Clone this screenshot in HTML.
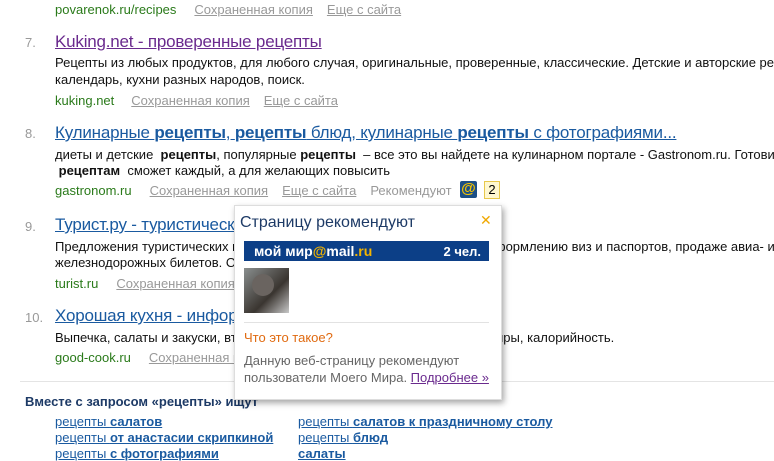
<!DOCTYPE html>
<html><head><meta charset="utf-8"><style>
body{margin:0;width:774px;height:455px;overflow:hidden;background:#fff;font-family:"Liberation Sans",Arial,sans-serif;position:relative}
.a{position:absolute;white-space:nowrap}
.num{color:#999;font-size:13px}
.t{font-size:17px;color:#1a5aa0;text-decoration:underline;letter-spacing:-0.2px}
.t.v{color:#6a2a8e}
.s{font-size:13px;color:#111}
.g{font-size:13px;color:#2a7a1a}
.c{font-size:13px;color:#999;text-decoration:underline}
.l{font-size:13px;color:#1a5aa0;text-decoration:underline}
b{font-weight:bold}
</style></head><body>
<div class="a" style="left:55px;top:1px"><span class="g">povarenok.ru/recipes</span><span class="c" style="margin-left:18px">Сохраненная копия</span><span class="c" style="margin-left:14px">Еще с сайта</span></div>

<div class="a num" style="left:25px;top:35px">7.</div>
<div class="a t v" style="left:55px;top:32px">Kuking.net - проверенные рецепты</div>
<div class="a s" style="left:55px;top:55px">Рецепты из любых продуктов, для любого случая, оригинальные, проверенные, классические. Детские и авторские рецепты</div>
<div class="a s" style="left:55px;top:72px">календарь, кухни разных народов, поиск.</div>
<div class="a" style="left:55px;top:92px"><span class="g">kuking.net</span><span class="c" style="margin-left:17px">Сохраненная копия</span><span class="c" style="margin-left:14px">Еще с сайта</span></div>

<div class="a num" style="left:25px;top:126px">8.</div>
<div class="a t" style="left:55px;top:123px">Кулинарные <b>рецепты</b>, <b>рецепты</b> блюд, кулинарные <b>рецепты</b> с фотографиями...</div>
<div class="a s" style="left:55px;top:147px">диеты и детские &nbsp;<b>рецепты</b>, популярные <b>рецепты</b> &nbsp;– все это вы найдете на кулинарном портале - Gastronom.ru. Готовить по</div>
<div class="a s" style="left:55px;top:163px">&nbsp;<b>рецептам</b> &nbsp;сможет каждый, а для желающих повысить</div>
<div class="a" style="left:55px;top:182px"><span class="g">gastronom.ru</span><span class="c" style="margin-left:18px">Сохраненная копия</span><span class="c" style="margin-left:14px">Еще с сайта</span><span style="margin-left:14px;font-size:13px;color:#999">Рекомендуют</span></div>
<div class="a" style="left:460px;top:181px;width:17px;height:17px;background:#1c4f86;border-radius:2px;color:#f2c200;font-size:15px;line-height:16px;text-align:center;font-weight:bold">@</div>
<div class="a" style="left:484px;top:181px;width:14px;height:16px;background:#fff8d0;border:1px solid #e8c84a;font-size:13px;line-height:16px;text-align:center">2</div>

<div class="a num" style="left:25px;top:219px">9.</div>
<div class="a t" style="left:55px;top:215px">Турист.ру - туристический</div>
<div class="a s" style="left:55px;top:239px">Предложения туристических компаний по турам, отелям и экскурсиям, оформлению виз и паспортов, продаже авиа- и</div>
<div class="a s" style="left:55px;top:255px">железнодорожных билетов. О</div>
<div class="a" style="left:55px;top:275px"><span class="g">turist.ru</span><span class="c" style="margin-left:18px">Сохраненная копия</span></div>

<div class="a num" style="left:25px;top:310px">10.</div>
<div class="a t" style="left:55px;top:306px">Хорошая кухня - информация</div>
<div class="a s" style="left:55px;top:330px">Выпечка, салаты и закуски, вторые блюда, супы, десерты, ккал, белки, жиры, калорийность.</div>
<div class="a" style="left:55px;top:349px"><span class="g">good-cook.ru</span><span class="c" style="margin-left:18px">Сохраненная копия</span></div>

<div class="a" style="left:20px;top:381px;width:754px;height:1px;background:#e4e4e4"></div>
<div class="a" style="left:25px;top:394px;font-size:13px;font-weight:bold;color:#1d3a66">Вместе с запросом «рецепты» ищут</div>
<div class="a l" style="left:55px;top:414px">рецепты <b>салатов</b></div>
<div class="a l" style="left:55px;top:430px">рецепты <b>от анастасии скрипкиной</b></div>
<div class="a l" style="left:55px;top:446px">рецепты <b>с фотографиями</b></div>
<div class="a l" style="left:298px;top:414px">рецепты <b>салатов к праздничному столу</b></div>
<div class="a l" style="left:298px;top:430px">рецепты <b>блюд</b></div>
<div class="a l" style="left:298px;top:446px"><b>салаты</b></div>

<div class="a" style="left:234px;top:205px;width:266px;height:193px;background:#fff;border:1px solid #ddd;box-shadow:2px 3px 6px rgba(0,0,0,.35)">
 <div class="a" style="left:5px;top:8px;font-size:16px;color:#1d3a66">Страницу рекомендуют</div>
 <div class="a" style="left:245px;top:6px;font-size:14px;color:#f0a800">✕</div>
 <div class="a" style="left:9px;top:35px;width:245px;height:20px;background:#0c3f87">
  <span class="a" style="left:10px;top:2px;font-size:14px;font-weight:bold;color:#fff">мой мир<span style="color:#f3b400">@</span>mail<span style="color:#f3b400">.ru</span></span>
  <span class="a" style="right:8px;top:3px;font-size:13px;font-weight:bold;color:#fff">2 чел.</span>
 </div>
 <div class="a" style="left:9px;top:62px;width:45px;height:45px;background:linear-gradient(135deg,#8a8f8f,#3a3530 60%,#c8c8c8)"></div>
 <div class="a" style="left:17px;top:68px;width:22px;height:22px;border-radius:50%;background:#6a6460"></div>
 <div class="a" style="left:9px;top:116px;width:245px;height:1px;background:#e2e2e2"></div>
 <div class="a" style="left:9px;top:124px;font-size:13px;color:#e06a10">Что это такое?</div>
 <div class="a" style="left:9px;top:147px;font-size:13px;color:#666">Данную веб-страницу рекомендуют</div>
 <div class="a" style="left:9px;top:164px;font-size:13px;color:#666">пользователи Моего Мира. <span style="color:#6a2a8e;text-decoration:underline">Подробнее »</span></div>
</div>
</body></html>
